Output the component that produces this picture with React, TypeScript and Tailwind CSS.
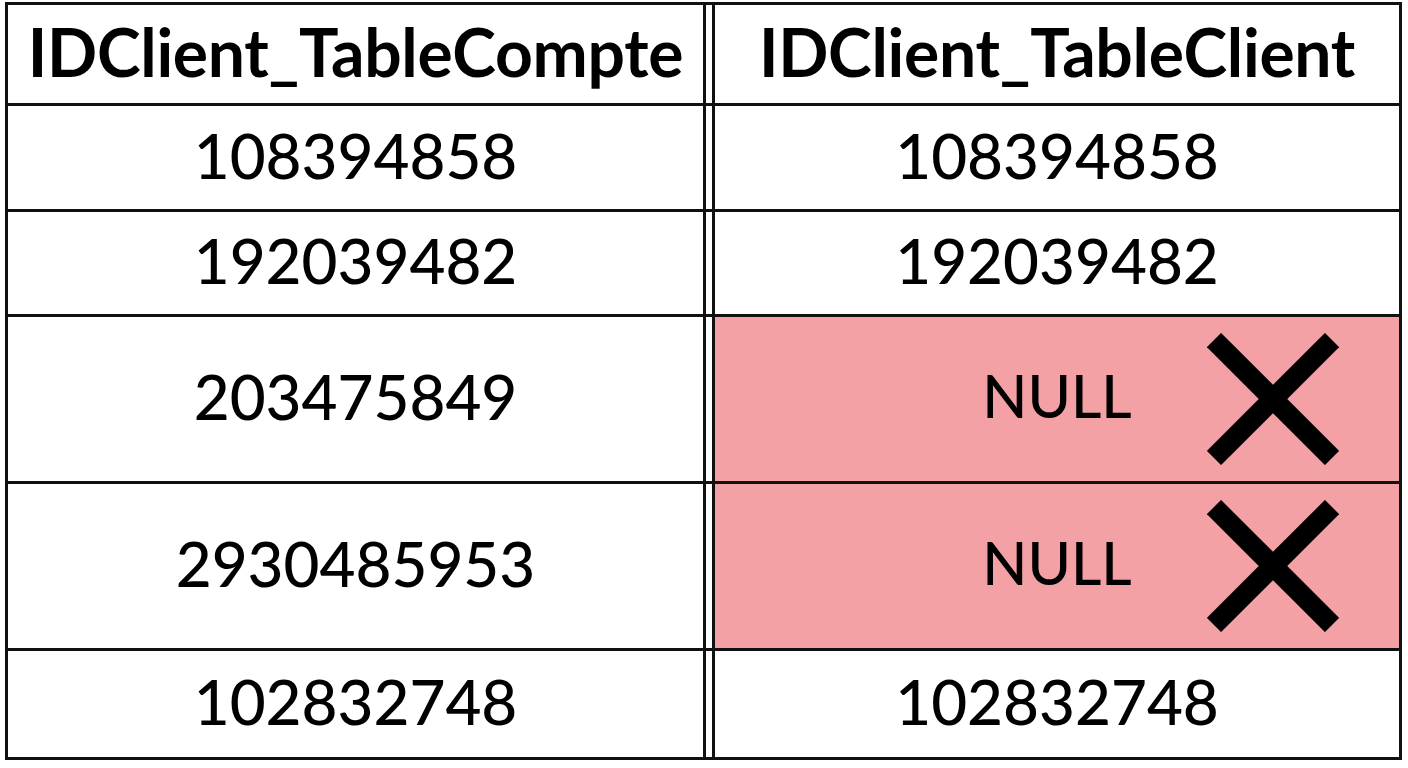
import React from "react";

const XMark = () => (
  <svg width="132" height="132" viewBox="0 0 132 132" className="block">
    <line x1="7" y1="7" x2="125" y2="125" stroke="#000" strokeWidth="20" />
    <line x1="125" y1="7" x2="7" y2="125" stroke="#000" strokeWidth="20" />
  </svg>
);

type Row = { a: string; b: string; nul?: boolean; h: string; border: boolean };

const rows: Row[] = [
  { a: "108394858", b: "108394858", h: "h-[106px]", border: true },
  { a: "192039482", b: "192039482", h: "h-[105px]", border: true },
  { a: "203475849", b: "NULL", nul: true, h: "h-[167px]", border: true },
  { a: "2930485953", b: "NULL", nul: true, h: "h-[167px]", border: true },
  { a: "102832748", b: "102832748", h: "h-[106px]", border: false },
];

export default function App() {
  return (
    <div className="w-[1408px] h-[768px] bg-white overflow-hidden pt-[2px] pl-[5px]" style={{ fontFamily: "Lato, 'Open Sans', sans-serif" }}>
      <div className="w-[1397px] border-[3px] border-[#111] text-black">
        <div className="flex h-[101px] border-b-[3px] border-[#111]">
          <div className="w-[698px] border-r-[3px] border-[#111] flex items-center justify-center pb-[6px] text-[66px] font-bold tracking-[-0.3px]">
            IDClient_TableCompte
          </div>
          <div className="w-[6px]" />
          <div className="w-[687px] border-l-[3px] border-[#111] flex items-center justify-center pb-[6px] text-[66px] font-bold tracking-[-0.3px]">
            IDClient_TableClient
          </div>
        </div>
        {rows.map((r, i) => (
          <div key={i} className={`flex ${r.h} ${r.border ? "border-b-[3px] border-[#111]" : ""}`}>
            <div className="w-[698px] border-r-[3px] border-[#111] flex items-center justify-center pb-[5px] text-[62px] font-medium">
              {r.a}
            </div>
            <div className="w-[6px]" />
            <div className={`w-[687px] border-l-[3px] border-[#111] flex items-center justify-center pb-[5px] text-[62px] font-medium relative ${r.nul ? "bg-[#f3a1a5]" : ""}`}>
              {r.nul ? <span className="text-[59px]">{r.b}</span> : r.b}
              {r.nul && (
                <div className="absolute right-[60px] top-1/2 -translate-y-1/2">
                  <XMark />
                </div>
              )}
            </div>
          </div>
        ))}
      </div>
    </div>
  );
}
